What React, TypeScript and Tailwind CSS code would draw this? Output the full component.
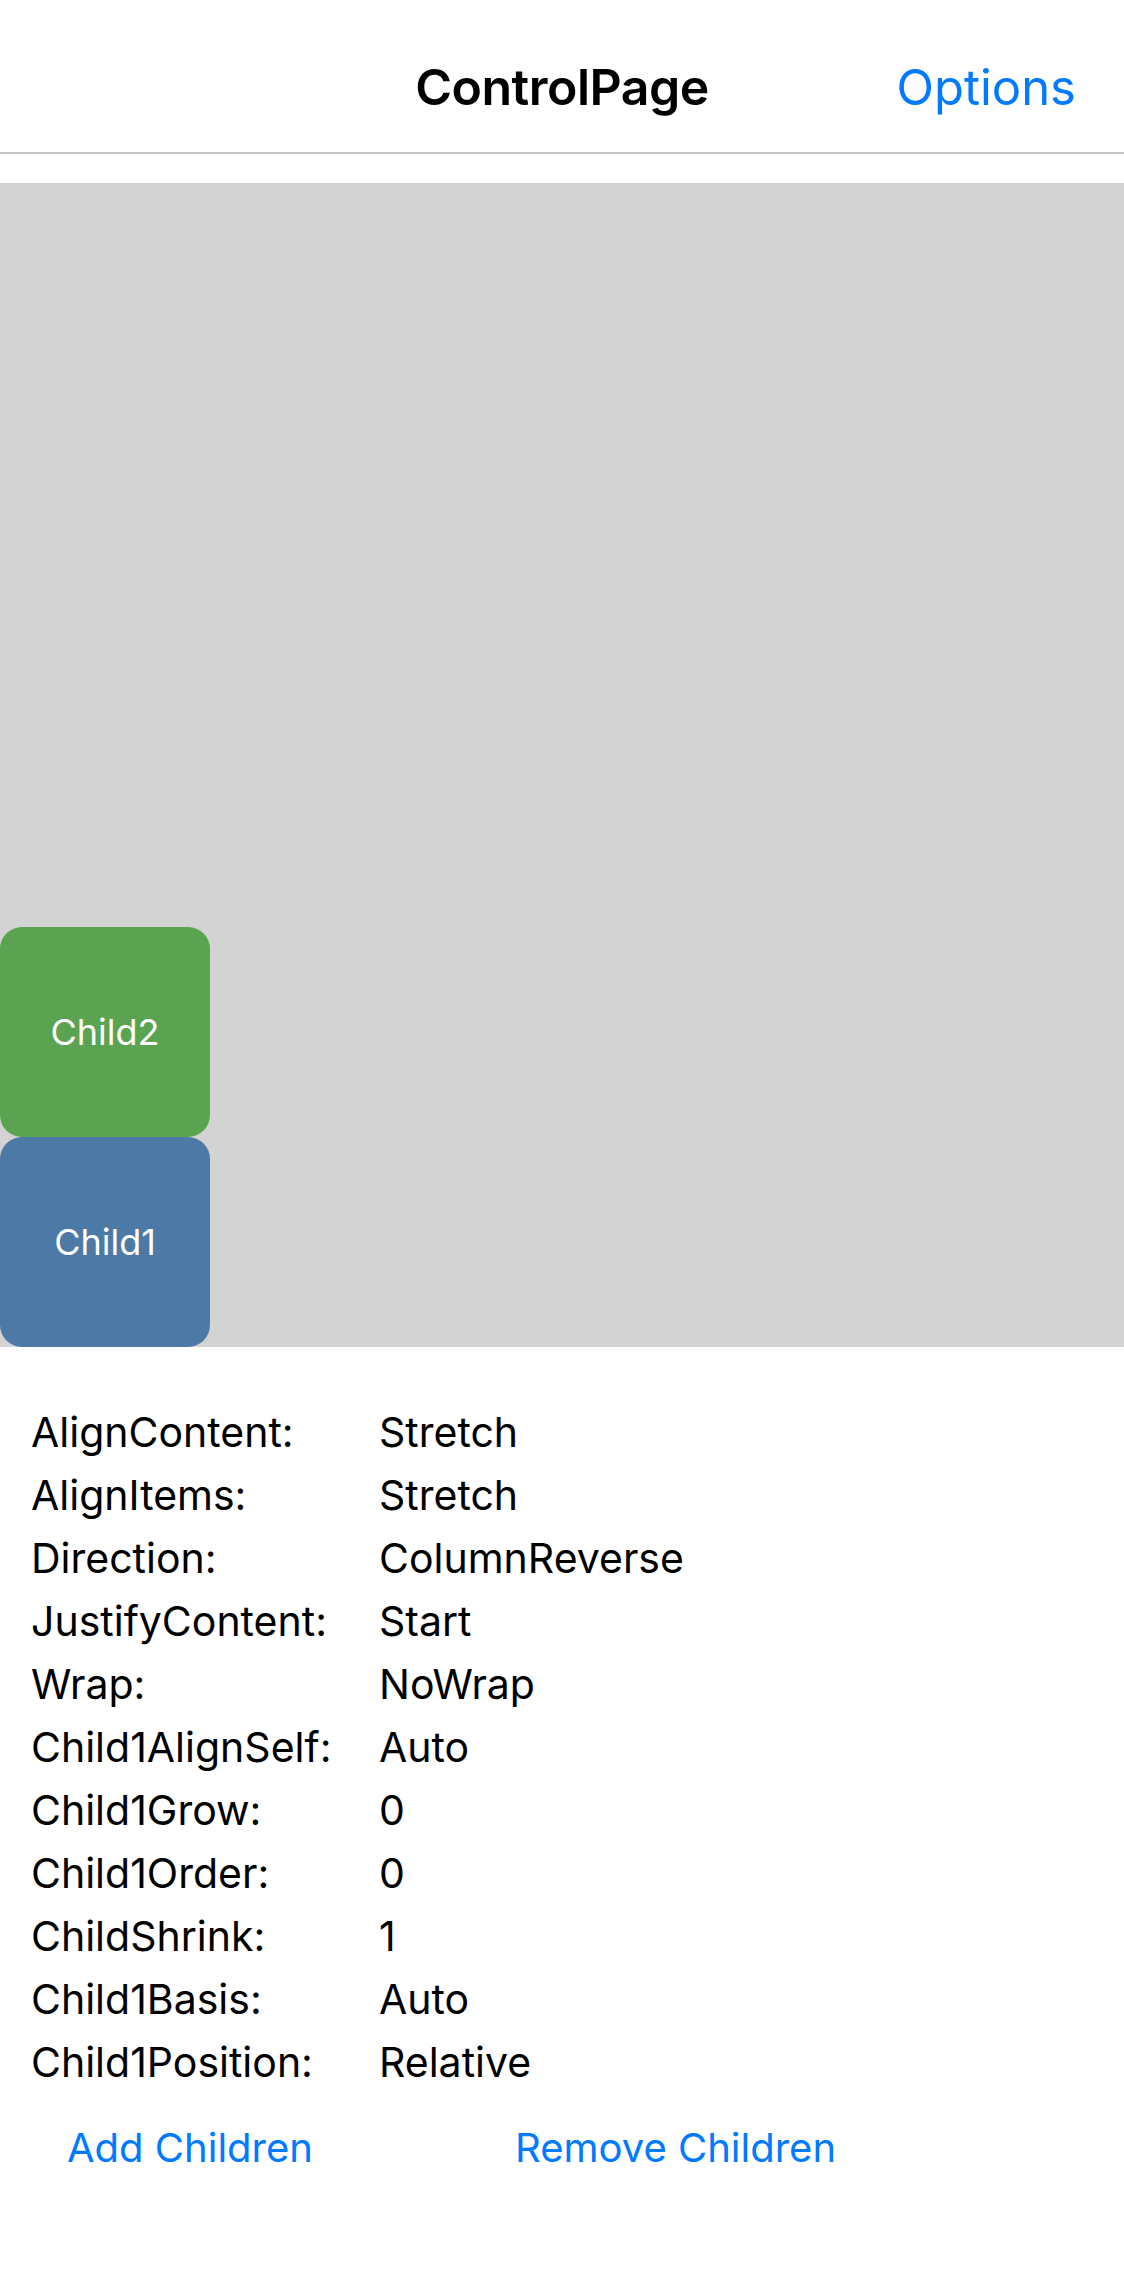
const rows: [string, string][] = [
  ['AlignContent:', 'Stretch'],
  ['AlignItems:', 'Stretch'],
  ['Direction:', 'ColumnReverse'],
  ['JustifyContent:', 'Start'],
  ['Wrap:', 'NoWrap'],
  ['Child1AlignSelf:', 'Auto'],
  ['Child1Grow:', '0'],
  ['Child1Order:', '0'],
  ['ChildShrink:', '1'],
  ['Child1Basis:', 'Auto'],
  ['Child1Position:', 'Relative'],
];

export default function App() {
  return (
    <div className="min-h-[2286px] w-full bg-white font-['Inter','Noto_Sans',sans-serif] text-black">
      {/* Navigation bar */}
      <div className="relative flex h-[154px] items-center justify-center border-b-2 border-[#c2c2c2] pt-[22px]">
        <span className="text-[50px] font-semibold tracking-[-0.5px]">ControlPage</span>
        <span className="absolute right-[48px] top-[22px] flex h-[132px] items-center text-[49px] text-[#007aff]">
          Options
        </span>
      </div>

      {/* Flex container demo */}
      <div className="mt-[29px] flex h-[1164px] flex-col-reverse bg-[#d3d3d3]">
        <div className="flex h-[210px] w-[210px] items-center justify-center rounded-[22px] bg-[#4d79a6] text-[36px] text-white">
          Child1
        </div>
        <div className="flex h-[210px] w-[210px] items-center justify-center rounded-[22px] bg-[#5aa351] text-[36px] text-white">
          Child2
        </div>
      </div>

      {/* Properties */}
      <div className="px-[31px] pt-[54px]">
        {rows.map(([label, value]) => (
          <div key={label} className="flex h-[63px] items-center text-[41px]">
            <span className="w-[348px]">{label}</span>
            <span>{value}</span>
          </div>
        ))}
      </div>

      <div className="mt-[22px] flex h-[63px] items-center pl-[67px] text-[40px] text-[#007aff]">
        <div className="w-[448px]">
          <button>Add Children</button>
        </div>
        <button>Remove Children</button>
      </div>
    </div>
  );
}
